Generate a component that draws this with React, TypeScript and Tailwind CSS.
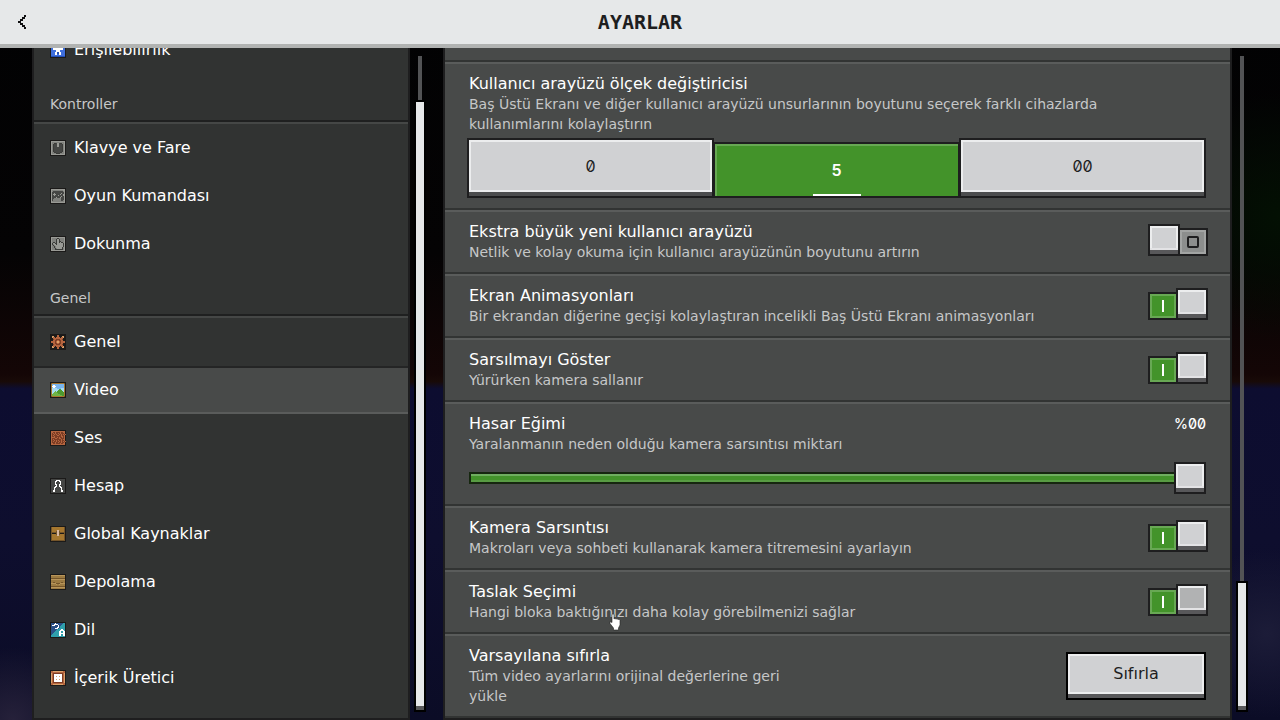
import { useState } from 'react';

const palette: Record<string, string> = {
  k: '#1b1a19',
  q: '#3a3b38',
  g: '#80817d',
  h: '#999a95',
  d: '#454644',
  w: '#ffffff',
  b: '#3f6fdc',
  n: '#2450b4',
  o: '#b5653f',
  r: '#7d3d24',
  y: '#dba26a',
  c: '#a8dcf2',
  s: '#79b4ec',
  e: '#4d9a2f',
  f: '#6fb548',
  t: '#a5772f',
  u: '#b8955a',
  z: '#9c7b42',
  v: '#74552a',
  p: '#d9b9a4',
  m: '#2a4f86',
  a: '#2f9fac',
};

const icons: Record<string, string[]> = {
  access: [
    'kkkkkkkkkkkkkkkk', 'kbbbbbbbbbbbbbbk', 'kbbbbbbwwbbbbbbk', 'kbbbbbbwwbbbbbbk',
    'kbbbbbbwwbbbbbbk', 'kbbbbbbbbbbbbbbk', 'kbbwwwwwwwwwwbbk', 'kbbwwwwwwwwwwbbk',
    'kbbbbbwwwwbbbbbk', 'kbbbbbwwwwbbbbbk', 'kbbbbwwnnwwbbbbk', 'kbbbbwwnnwwbbbbk',
    'kbbbbwwbbwwbbbbk', 'kbbbbbbbbbbbbbbk', 'knnnnnnnnnnnnnnk', 'kkkkkkkkkkkkkkkk',
  ],
  mouse: [
    'kkkkkkkkkkkkkkkk', 'khhhhhhhhhhhhhhk', 'khgggggggggggghk', 'khggqqdhhdqqgghk',
    'khgqdddhhdddqghk', 'khgqdddhhdddqghk', 'khgqdddhhdddqghk', 'khgqddddddddqghk',
    'khgqddddddddqghk', 'khgqddddddddqghk', 'khgqddddddddqghk', 'khgqddddddddqghk',
    'khggqqddddqqgghk', 'khggggqqqqgggghk', 'khhhhhhhhhhhhhhk', 'kkkkkkkkkkkkkkkk',
  ],
  gamepad: [
    'kkkkkkkkkkkkkkkk', 'khhhhhhhhhhhhhhk', 'khggggggggggghhk', 'khgddddddddddghk',
    'khddddddddddddhk', 'khddhddddddhddhk', 'khdhhhddddhddhhk', 'khddhdddhddddhhk',
    'khdddddddddhddhk', 'khddddhdddhdddhk', 'khddgggggggdddhk', 'khdggggggggdddhk',
    'khdggggggggddghk', 'khgggggggggggghk', 'khhhhhhhhhhhhhhk', 'kkkkkkkkkkkkkkkk',
  ],
  touch: [
    'kkkkkkkkkkkkkkkk', 'khhhhhhhhhhhhhhk', 'khgggggqqggggghk', 'khggggqhhqgggghk',
    'khggggqhhqgggghk', 'khggggqhhqqggghk', 'khgqqgqhhqhqqghk', 'khqhhqqhhhhhhqhk',
    'khqghhqhhhhhhqhk', 'khgqghhhhhhhhqhk', 'khggqghhhhhhhqhk', 'khggqghhhhhhqghk',
    'khgggqghhhhhqghk', 'khgggqqqqqqqqghk', 'khhhhhhhhhhhhhhk', 'kkkkkkkkkkkkkkkk',
  ],
  gear: [
    'kkkkkkkkkkkkkkkk', 'kkkkkkkookkkkkkk', 'kkyykkkookkkyykk', 'kkyookooookooykk',
    'kkkooooooooookkk', 'kkkroorrrroorkkk', 'kkkoorroorrookkk', 'kooooroyyorooook',
    'kooooroyyorooook', 'kkkoorroorrookkk', 'kkkroorrrroorkkk', 'kkkooooooooookkk',
    'kkyookooookooykk', 'kkyykkkookkkyykk', 'kkkkkkkookkkkkkk', 'kkkkkkkkkkkkkkkk',
  ],
  picture: [
    'kkkkkkkkkkkkkkkk', 'kvttttttttttttvk', 'ktsssssssssssstk', 'ktswwssssssssstk',
    'ktwwwwsssssssstk', 'ktswwssssssssstk', 'ktcccccssssccctk', 'ktccccccceeccctk',
    'ktcccccceeeecctk', 'ktcccfceeeeeectk', 'ktccfffeeeeeeetk', 'ktcfffffeeeeeetk',
    'ktffffffffeeeetk', 'ktffffffffffeetk', 'kvttttttttttttvk', 'kkkkkkkkkkkkkkkk',
  ],
  note: [
    'kkkkkkkkkkkkkkkk', 'kooooooooooooook', 'koorrorrrrorrook', 'korororrororrrok',
    'korrororrorororo', 'kororrroorrorrok', 'korrorrrrrroorok', 'koooorrororrorok',
    'korrroorroorrrok', 'kororrrrrrrorook', 'korrorororrorrok', 'kororrorrorororo',
    'korrrorrorrorrok', 'koorrorrrrorrook', 'kooooooooooooook', 'kkkkkkkkkkkkkkkk',
  ],
  person: [
    'kkkkkkkkkkkkkkkk', 'kddddddddddddddk', 'kdddddwwwwdddddk', 'kddddwwddwwddddk',
    'kddddwddddwddddk', 'kddddwddddwddddk', 'kddddwwddwwddddk', 'kdddddwddwdddddk',
    'kddddwwddwwddddk', 'kdddwwddddwwdddk', 'kdddwddddddwdddk', 'kdddwddddddwdddk',
    'kddwwddddddwwddk', 'kddwwddddddwwddk', 'kddddddddddddddk', 'kkkkkkkkkkkkkkkk',
  ],
  chest: [
    'kkkkkkkkkkkkkkkk', 'kvttttttttttttvk', 'kvttttttttttttvk', 'kvttttttttttttvk',
    'kvtttttpptttttvk', 'kvttttvppvttttvk', 'kvvvvvvppvvvvvvk', 'kvkkkkvppvkkkkvk',
    'kvttttvppvttttvk', 'kvtttttpptttttvk', 'kvttttttttttttvk', 'kvttttttttttttvk',
    'kvttttttttttttvk', 'kvttttttttttttvk', 'kvvvvvvvvvvvvvvk', 'kkkkkkkkkkkkkkkk',
  ],
  storage: [
    'kkkkkkkkkkkkkkkk', 'kuuuuuuuuuuuuuuk', 'kzzzzzzzzzzzzzzk', 'kzzzzzzzzzzzzzzk',
    'kvvvvvvvvvvvvvvk', 'kuuuuuuuuuuuuuuk', 'kzzzzzzzzzzzzzzk', 'kzzzzzzzzzzzzzzk',
    'kzzvvzzzzzzvvzzk', 'kuuuuuvvvvuuuuuk', 'kzzzzzuzzuzzzzzk', 'kzzzzzzzzzzzzzzk',
    'kvvvvvvvvvvvvvvk', 'kuuuuuuuuuuuuuuk', 'kzzzzzzzzzzzzzzk', 'kkkkkkkkkkkkkkkk',
  ],
  language: [
    'kkkkkkkkkkkkkkkk', 'kmmmmwmmmmmmmaak', 'kmmmwwwwmmmmaaak', 'kmwwwmmmwmmaaaak',
    'kmmmmmmmwmaaaaak', 'kmmmmmmwwmaaaaak', 'kmmmmwwwmaaaaaak', 'kmmmmmmaaaawwaak',
    'kmmmmmaaaawwwwak', 'kmmmmaaaawwaawwk', 'kmmmaaaaawwaawwk', 'kmmaaaaaawwwwwwk',
    'kmaaaaaaawwaawwk', 'kaaaaaaaawwaawwk', 'kaaaaaaaaaaaaaak', 'kkkkkkkkkkkkkkkk',
  ],
  creator: [
    'kkkkkkkkkkkkkkkk', 'kooyyyyyyyyyyook', 'kooooooooooooook', 'kyorrrrrrrrrroyk',
    'kyorwwwwwwwwroyk', 'kyorwwwwwwwwroyk', 'kyorwwywwywwroyk', 'kyorwwwwwwwwroyk',
    'kyorwwwwwwwwroyk', 'kyorwwywwywwroyk', 'kyorwwwwwwwwroyk', 'kyorwwwwwwwwroyk',
    'kyorrrrrrrrrroyk', 'kooooooooooooook', 'kooyyyyyyyyyyook', 'kkkkkkkkkkkkkkkk',
  ],
};

const controls = [
  { icon: 'mouse', label: 'Klavye ve Fare' },
  { icon: 'gamepad', label: 'Oyun Kumandası' },
  { icon: 'touch', label: 'Dokunma' },
];

const general = [
  { icon: 'gear', label: 'Genel' },
  { icon: 'picture', label: 'Video' },
  { icon: 'note', label: 'Ses' },
  { icon: 'person', label: 'Hesap' },
  { icon: 'chest', label: 'Global Kaynaklar' },
  { icon: 'storage', label: 'Depolama' },
  { icon: 'language', label: 'Dil' },
  { icon: 'creator', label: 'İçerik Üretici' },
];

function PixelIcon({ name }: { name: string }) {
  return (
    <svg viewBox="0 0 16 16" className="w-4 h-4 shrink-0" shapeRendering="crispEdges" aria-hidden="true">
      {icons[name].map((row, y) =>
        row.split('').map((ch, x) => (
          <rect key={`${x}-${y}`} x={x} y={y} width="1" height="1" fill={palette[ch]} />
        ))
      )}
    </svg>
  );
}

function NavItem({ icon, label, active, onClick }: {
  icon: string;
  label: string;
  active: boolean;
  onClick: () => void;
}) {
  return (
    <button
      onClick={onClick}
      className={`w-full h-12 shrink-0 flex items-center gap-2 px-4 border-y-2 text-base leading-5 text-white text-left cursor-pointer ${
        active ? 'bg-[#484a49] border-t-[#242525] border-b-[#5a5c5b]' : 'border-transparent'
      }`}
    >
      <PixelIcon name={icon} />
      {label}
    </button>
  );
}

function NavHeading({ children }: { children: string }) {
  return (
    <div className="shrink-0">
      <h2 className="pt-4 pb-0.5 px-4 text-sm leading-7 text-[#c6c7c8]">{children}</h2>
      <div className="h-1 bg-[#454746] border-t-2 border-[#1f2020]" />
    </div>
  );
}

function Toggle({ id, checked, hovered, onChange }: {
  id: string;
  checked: boolean;
  hovered?: boolean;
  onChange: () => void;
}) {
  const knob = (
    <span
      className={`w-8 h-8 border-2 border-[#1e1e1f] shadow-[inset_0_-4px_0_#58585a,inset_0_-6px_0_#e3e3e5,inset_0_0_0_2px_#ecedee] ${
        hovered ? 'bg-[#b1b2b3]' : 'bg-[#d0d1d3]'
      }`}
    />
  );
  return (
    <label htmlFor={id} className="relative self-start flex items-end mt-0.5 -mr-0.5 shrink-0 cursor-pointer">
      <input id={id} type="checkbox" checked={checked} onChange={onChange} className="sr-only" />
      {checked ? (
        <>
          <span className="w-[30px] h-7 -mr-0.5 flex items-center justify-center bg-[#43932a] border-2 border-[#1e1e1f] shadow-[inset_0_0_0_2px_#68a854]">
            <span className="w-0.5 h-3 bg-white" />
          </span>
          {knob}
        </>
      ) : (
        <>
          {knob}
          <span className="w-[30px] h-7 -ml-0.5 flex items-center justify-center bg-[#8c8e8d] border-2 border-[#1e1e1f] shadow-[inset_0_0_0_2px_#a2a4a3]">
            <span className="w-3 h-3 rounded-xs border-2 border-[#1e1e1f]" />
          </span>
        </>
      )}
    </label>
  );
}

function RowText({ id, title, text }: { id?: string; title: string; text: string }) {
  return (
    <div className="min-w-0 pr-6">
      <label htmlFor={id} className="block text-base leading-5 text-white">{title}</label>
      <p className="text-sm leading-5 text-[#c6c7c8]">{text}</p>
    </div>
  );
}

const rowClass = 'shrink-0 px-6 py-[10px] border-t-2 border-t-[#5a5c5b] border-b-2 border-b-[#323433]';

function Scrollbar({ thumb }: { thumb: string }) {
  return (
    <div className="w-3 shrink-0 py-2 flex flex-col items-center">
      <div className="w-1 flex-1 bg-[#525355]" />
      <div className={`w-3 border-2 border-black bg-[#e6e8e9] shadow-[inset_0_-4px_0_#58585a] ${thumb}`} />
    </div>
  );
}

export default function App() {
  const [active, setActive] = useState('Video');
  const [scale, setScale] = useState('5');
  const [tilt, setTilt] = useState(100);
  const [toggles, setToggles] = useState<Record<string, boolean>>({
    large: false,
    animations: true,
    bobbing: true,
    shake: true,
    outline: true,
  });

  const flip = (key: string) => setToggles(prev => ({ ...prev, [key]: !prev[key] }));

  return (
    <div className="relative h-screen flex flex-col overflow-hidden bg-[radial-gradient(circle_at_100%_30%,#031003_0%,transparent_9%),radial-gradient(circle_at_99%_88%,#1c1c38_0%,transparent_6%),radial-gradient(circle_at_1%_100%,#26213a_0%,transparent_5%),linear-gradient(#020203_0%,#040304_35%,#140606_52%,#180a08_53%,#0d0d30_54%,#0e0e2e_75%,#0b0c26_100%)] font-['DejaVu_Sans',sans-serif]">
      {/* Header */}
      <header className="h-12 shrink-0 relative flex items-center justify-center bg-[#e6e8e9] border-b-4 border-[#b1b3b2] z-10">
        <button aria-label="Geri" className="absolute left-4 top-[15px] w-3 h-3.5 cursor-pointer">
          <svg viewBox="0 0 12 14" className="w-3 h-3.5" shapeRendering="crispEdges" fill="#0f0f10">
            <path d="M8 0h2v2H8zM6 2h3v2H6zM4 4h3v2H4zM2 6h3v2H2zM4 8h3v2H4zM6 10h3v2H6zM8 12h2v2H8z" />
          </svg>
        </button>
        <h1 className="text-xl leading-6 font-bold text-[#1e1e1f] font-['DejaVu_Sans_Mono',monospace]">AYARLAR</h1>
      </header>

      <main className="flex-1 min-h-0 flex px-8">
        {/* Categories */}
        <nav className="w-[378px] shrink-0 flex flex-col justify-end overflow-hidden bg-[#313332] border-2 border-t-0 border-[#1e1e1f] pb-4">
          <NavItem icon="access" label="Erişilebilirlik" active={active === 'Erişilebilirlik'} onClick={() => setActive('Erişilebilirlik')} />
          <NavHeading>Kontroller</NavHeading>
          {controls.map(item => (
            <NavItem key={item.label} {...item} active={active === item.label} onClick={() => setActive(item.label)} />
          ))}
          <NavHeading>Genel</NavHeading>
          {general.map(item => (
            <NavItem key={item.label} {...item} active={active === item.label} onClick={() => setActive(item.label)} />
          ))}
        </nav>
        <div className="flex ml-1 mr-[17px]">
          <Scrollbar thumb="h-14/15" />
        </div>

        {/* Video settings */}
        <section className="flex-1 min-w-0 flex flex-col justify-end overflow-hidden bg-[#484a49] border-2 border-t-0 border-[#1e1e1f]">
          <div className={rowClass}>
            <p className="text-sm leading-5 text-[#c6c7c8]">Kenar yoğunluğunu daha kontrollü ve kolay görünür kılar</p>
          </div>

          <div className={rowClass}>
            <RowText
              title="Kullanıcı arayüzü ölçek değiştiricisi"
              text="Baş Üstü Ekranı ve diğer kullanıcı arayüzü unsurlarının boyutunu seçerek farklı cihazlarda kullanımlarını kolaylaştırın"
            />
            <div role="radiogroup" aria-label="Ölçek" className="mt-1 -ml-0.5 h-[60px] flex items-end">
              {['0', '5', '00'].map(value => {
                const selected = scale === value;
                return (
                  <label
                    key={value}
                    className={`relative flex-1 flex items-center justify-center border-2 border-[#1e1e1f] not-first:-ml-px text-base leading-5 slashed-zero font-['Inter',sans-serif] cursor-pointer ${
                      selected
                        ? 'h-14 bg-[#43932a] text-white font-semibold shadow-[inset_2px_2px_0_#68a854]'
                        : 'h-[60px] pb-1 bg-[#d0d1d3] text-[#1e1e1f] shadow-[inset_0_-4px_0_#4c4d4e,inset_0_-6px_0_#ecedee,inset_0_0_0_2px_#ecedee]'
                    }`}
                  >
                    <input type="radio" name="scale" value={value} checked={selected} onChange={() => setScale(value)} className="sr-only" />
                    {value}
                    {selected && <span className="absolute bottom-0 w-12 h-0.5 bg-white" />}
                  </label>
                );
              })}
            </div>
          </div>

          <div className={`${rowClass} flex justify-between`}>
            <RowText id="large" title="Ekstra büyük yeni kullanıcı arayüzü" text="Netlik ve kolay okuma için kullanıcı arayüzünün boyutunu artırın" />
            <Toggle id="large" checked={toggles.large} onChange={() => flip('large')} />
          </div>

          <div className={`${rowClass} flex justify-between`}>
            <RowText id="animations" title="Ekran Animasyonları" text="Bir ekrandan diğerine geçişi kolaylaştıran incelikli Baş Üstü Ekranı animasyonları" />
            <Toggle id="animations" checked={toggles.animations} onChange={() => flip('animations')} />
          </div>

          <div className={`${rowClass} flex justify-between`}>
            <RowText id="bobbing" title="Sarsılmayı Göster" text="Yürürken kamera sallanır" />
            <Toggle id="bobbing" checked={toggles.bobbing} onChange={() => flip('bobbing')} />
          </div>

          <div className={rowClass}>
            <div className="flex justify-between">
              <RowText id="tilt" title="Hasar Eğimi" text="Yaralanmanın neden olduğu kamera sarsıntısı miktarı" />
              <span className="text-sm leading-5 font-medium text-white slashed-zero font-['Inter',sans-serif]">%00</span>
            </div>
            <input
              id="tilt"
              type="range"
              min={0}
              max={100}
              value={tilt}
              onChange={e => setTilt(Number(e.target.value))}
              className="block w-full h-8 mt-2 appearance-none bg-transparent cursor-pointer [&::-webkit-slider-runnable-track]:h-3 [&::-webkit-slider-runnable-track]:bg-[#43932a] [&::-webkit-slider-runnable-track]:shadow-[inset_0_0_0_2px_#16270f,inset_2px_4px_0_#6fae5f,inset_0_-4px_0_#589c43] [&::-webkit-slider-thumb]:appearance-none [&::-webkit-slider-thumb]:box-border [&::-webkit-slider-thumb]:w-8 [&::-webkit-slider-thumb]:h-8 [&::-webkit-slider-thumb]:-mt-[10px] [&::-webkit-slider-thumb]:border-2 [&::-webkit-slider-thumb]:border-solid [&::-webkit-slider-thumb]:border-[#1e1e1f] [&::-webkit-slider-thumb]:bg-[#d0d1d3] [&::-webkit-slider-thumb]:shadow-[inset_0_-4px_0_#58585a,inset_0_-6px_0_#e3e3e5,inset_0_0_0_2px_#ecedee]"
            />
          </div>

          <div className={`${rowClass} flex justify-between`}>
            <RowText id="shake" title="Kamera Sarsıntısı" text="Makroları veya sohbeti kullanarak kamera titremesini ayarlayın" />
            <Toggle id="shake" checked={toggles.shake} onChange={() => flip('shake')} />
          </div>

          <div className={`${rowClass} flex justify-between`}>
            <RowText id="outline" title="Taslak Seçimi" text="Hangi bloka baktığınızı daha kolay görebilmenizi sağlar" />
            <Toggle id="outline" checked={toggles.outline} hovered onChange={() => flip('outline')} />
          </div>

          <div className={`${rowClass} flex items-center justify-between`}>
            <div className="max-w-[360px]">
              <RowText id="reset" title="Varsayılana sıfırla" text="Tüm video ayarlarını orijinal değerlerine geri yükle" />
            </div>
            <button
              id="reset"
              className="w-[140px] h-12 pb-1 shrink-0 border-2 border-black bg-[#d0d1d3] text-base leading-5 text-[#1e1e1f] shadow-[inset_0_-4px_0_#58585a,inset_0_-6px_0_#ecedee,inset_0_0_0_2px_#ecedee] cursor-pointer"
            >
              Sıfırla
            </button>
          </div>
        </section>
        <div className="flex ml-1">
          <Scrollbar thumb="h-1/5" />
        </div>
      </main>

      {/* Pointer */}
      <svg viewBox="0 0 12 18" className="absolute left-[609px] top-[613px] w-3 h-[18px] pointer-events-none" aria-hidden="true">
        <path
          d="M3 1.5Q4 0 5 1.5V6l1-.7 1 .9 1-.6 1 .9 1-.3 1 1V12l-1.500 3v2H4.500v-2L1 10.500V8.500l2 1z"
          fill="#fff"
          stroke="#222"
          strokeWidth=".6"
        />
      </svg>
    </div>
  );
}
